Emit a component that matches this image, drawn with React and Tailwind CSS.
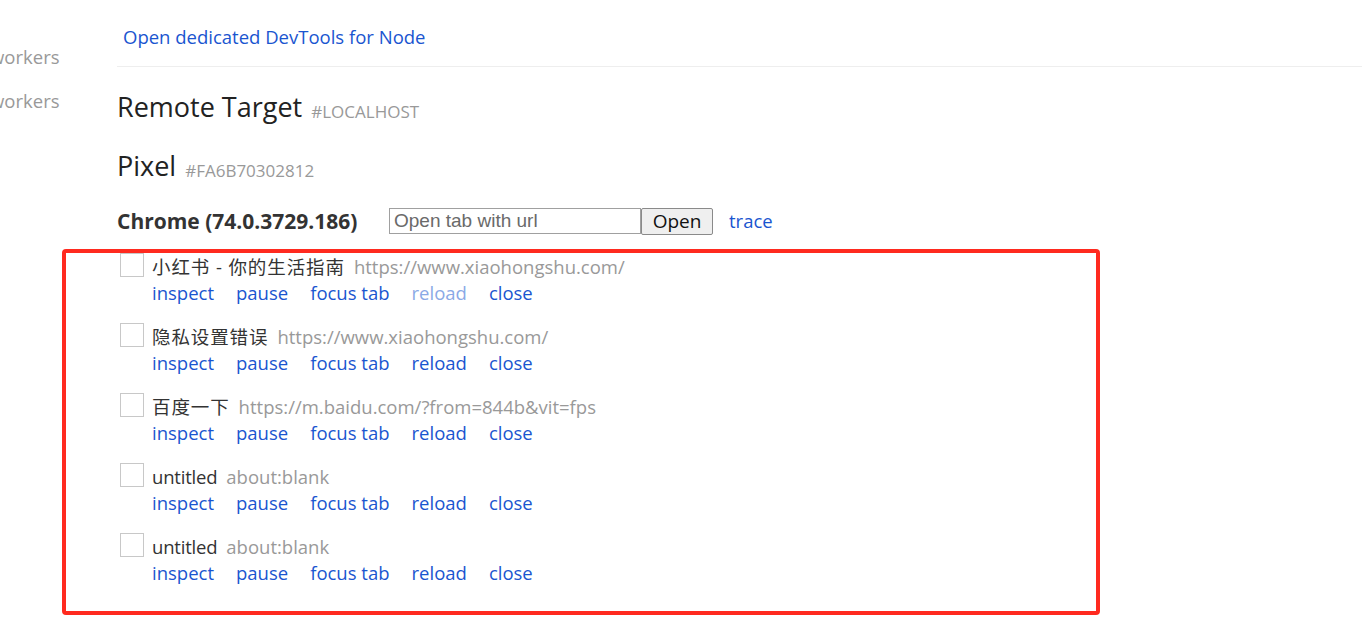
import React from "react";

const rows = [
  { title: "小红书 - 你的生活指南", url: "https://www.xiaohongshu.com/", reloadDisabled: true, cjk: true },
  { title: "隐私设置错误", url: "https://www.xiaohongshu.com/", cjk: true },
  { title: "百度一下", url: "https://m.baidu.com/?from=844b&vit=fps", cjk: true },
  { title: "untitled", url: "about:blank" },
  { title: "untitled", url: "about:blank" },
];

const font = { fontFamily: '"Open Sans", "Noto Sans CJK SC", sans-serif' };

function Row({ r }) {
  return (
    <div className="h-[70px] flex">
      <div className="w-[24px] h-[24px] border border-[#c8c8c8] mt-[1px] ml-[3px] mr-[8px] shrink-0" />
      <div className="flex flex-col pt-[2px]">
        <div className="h-[26px] flex items-center whitespace-nowrap">
          <span className={r.cjk ? "text-[#333] tracking-[0.9px]" : "text-[#333] tracking-[-0.2px]"}>{r.title}</span>
          <span className="ml-[9px] text-[#999]">{r.url}</span>
        </div>
        <div className="h-[26px] flex items-center gap-[22px] text-[#1a55d0]">
          <span>inspect</span>
          <span>pause</span>
          <span>focus tab</span>
          <span className={r.reloadDisabled ? "text-[#8aa9e6]" : ""}>reload</span>
          <span>close</span>
        </div>
      </div>
    </div>
  );
}

export default function App() {
  return (
    <div className="relative w-[1362px] h-[618px] overflow-hidden bg-white flex text-[18.5px] leading-none" style={font}>
      <div className="w-[117px] shrink-0 text-[#999] pt-[48px] overflow-hidden">
        <div className="h-[44px] -ml-[10px] whitespace-nowrap">workers</div>
        <div className="h-[44px] -ml-[10px] whitespace-nowrap">workers</div>
      </div>
      <div className="flex-1 flex flex-col">
        <div className="h-[67px] border-b border-[#eeeeee] flex items-center pl-[6px] pt-[8px] text-[#1a55d0]">
          Open dedicated DevTools for Node
        </div>
        <div className="h-[60px] flex items-end pb-[7px]">
          <span className="text-[27px] text-[#222]">Remote Target</span>
          <span className="ml-[9px] text-[17px] text-[#999]">#LOCALHOST</span>
        </div>
        <div className="h-[60px] flex items-end pb-[8px]">
          <span className="text-[27px] text-[#222]">Pixel</span>
          <span className="ml-[9px] text-[17px] text-[#999]">#FA6B70302812</span>
        </div>
        <div className="h-[61px] flex items-center pt-[7px]">
          <span className="font-bold text-[#333] text-[21px] w-[272px]">Chrome (74.0.3729.186)</span>
          <input
            className="w-[252px] h-[26px] border border-[#a0a0a0] px-[4px] text-[19px] text-[#666] placeholder-[#6a6a6a] outline-none"
            style={{ fontFamily: '"Liberation Sans", sans-serif' }}
            placeholder="Open tab with url"
            readOnly
          />
          <button className="h-[27px] w-[72px] border border-[#8a8a8a] rounded-[2px] bg-[#efefef] text-[#111] text-[19px] mr-[16px]">Open</button>
          <span className="text-[#1a55d0]">trace</span>
        </div>
        <div className="pt-[4px]">
          {rows.map((r, i) => (
            <Row key={i} r={r} />
          ))}
        </div>
      </div>
      <div className="absolute left-[62px] top-[249px] w-[1038px] h-[366px] border-[4px] border-[#ff2a1f] rounded-[4px] pointer-events-none" />
    </div>
  );
}
